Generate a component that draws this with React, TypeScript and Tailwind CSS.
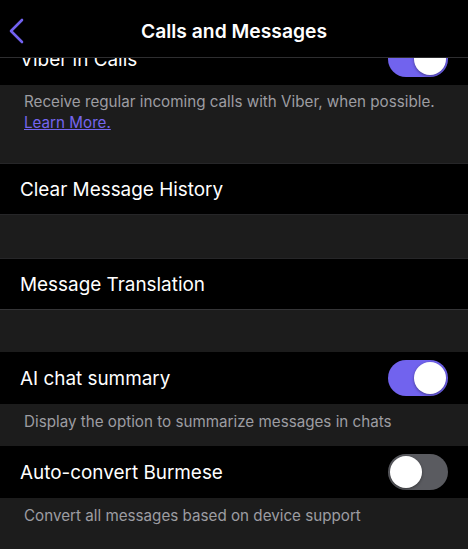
import React from "react";

function Toggle({ on }: { on: boolean }) {
  return (
    <div
      className={
        on
          ? "flex h-[36px] w-[60px] shrink-0 items-center justify-end rounded-full bg-[#7163ee] p-[2px]"
          : "flex h-[36px] w-[60px] shrink-0 items-center justify-start rounded-full bg-[#5a5b60] p-[2px]"
      }
    >
      <div className="h-[32px] w-[32px] rounded-full bg-white shadow-[0_1px_3px_rgba(0,0,0,0.4)]" />
    </div>
  );
}

function Row({ label, toggle, className = "" }: { label: string; toggle?: boolean; className?: string }) {
  return (
    <div className={"flex h-[52px] shrink-0 items-center justify-between bg-black pl-[20px] pr-[20px] " + className}>
      <span className="pt-[3px] text-[18.9px] leading-none text-white">{label}</span>
      {toggle !== undefined && <Toggle on={toggle} />}
    </div>
  );
}

export default function App() {
  return (
    <div
      className="flex h-[549px] w-[468px] flex-col overflow-hidden bg-[#1c1c1c]"
      style={{ fontFamily: "Inter, 'Liberation Sans', sans-serif" }}
    >
      <header className="z-10 grid h-[58px] shrink-0 grid-cols-[1fr_auto_1fr] items-center border-b border-[#2e2e30] bg-black">
        <div className="flex items-center pl-[9px] pt-[5px]">
          <svg width="16" height="26" viewBox="0 0 16 26" fill="none">
            <path
              d="M13 2 L2 13 L13 24"
              stroke="#7262f0"
              strokeWidth="2.6"
              strokeLinecap="round"
              strokeLinejoin="round"
            />
          </svg>
        </div>
        <h1 className="pt-[6px] text-[19.3px] font-semibold leading-none text-white">
          Calls and Messages
        </h1>
        <div />
      </header>
      <div className="flex flex-col overflow-hidden">
        <div className="mt-[-25px]">
          <Row label="Viber in Calls" toggle={true} />
        </div>
        <div className="px-[24px] pb-[30px] pt-[6px] text-[15.2px] leading-[21px] text-[#9d9da2]">
          <p className="whitespace-nowrap">Receive regular incoming calls with Viber, when possible.</p>
          <p className="text-[#7565ee] underline">Learn More.</p>
        </div>
        <Row label="Clear Message History" className="border-y border-[#262628]" />
        <div className="h-[43px] shrink-0" />
        <Row label="Message Translation" className="border-t border-[#262628] border-b border-b-[#353537]" />
        <div className="h-[42px] shrink-0" />
        <Row label="AI chat summary" toggle={true} />
        <div className="px-[24px] pb-[14px] pt-[7px] text-[15.2px] leading-[21px] text-[#9d9da2]">
          <p>Display the option to summarize messages in chats</p>
        </div>
        <Row label="Auto-convert Burmese" toggle={false} />
        <div className="px-[24px] pb-[14px] pt-[7px] text-[15.2px] leading-[21px] text-[#9d9da2]">
          <p>Convert all messages based on device support</p>
        </div>
      </div>
    </div>
  );
}
